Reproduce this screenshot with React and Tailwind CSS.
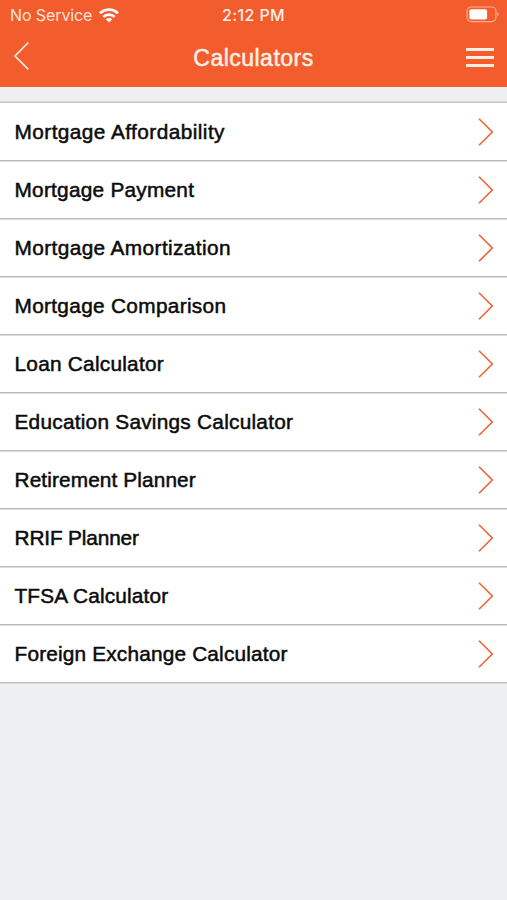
const rows = [
  { label: 'Mortgage Affordability', tracking: 'tracking-[0.44px]' },
  { label: 'Mortgage Payment', tracking: 'tracking-[0.25px]' },
  { label: 'Mortgage Amortization', tracking: 'tracking-[0.4px]' },
  { label: 'Mortgage Comparison', tracking: 'tracking-[0.32px]' },
  { label: 'Loan Calculator', tracking: 'tracking-[0.25px]' },
  { label: 'Education Savings Calculator', tracking: 'tracking-[0.25px]' },
  { label: 'Retirement Planner', tracking: 'tracking-[0.12px]' },
  { label: 'RRIF Planner', tracking: 'tracking-[-0.14px]' },
  { label: 'TFSA Calculator', tracking: 'tracking-[0.16px]' },
  { label: 'Foreign Exchange Calculator', tracking: 'tracking-[0.18px]' },
];

function WifiIcon() {
  return (
    <svg className="ml-[6.5px] h-[15px] w-[20px]" viewBox="0 0 20 15" fill="none" stroke="#fff" strokeWidth="2.7">
      <path d="M1 5.4C6 .4 14 .4 19 5.4" />
      <path d="M4.3 8.9C7.5 5.8 12.5 5.8 15.7 8.9" />
      <path d="M10 14.6L6.7 11.3C8.5 9.5 11.5 9.5 13.3 11.3Z" fill="#fff" stroke="none" />
    </svg>
  );
}

function BatteryIcon() {
  return (
    <svg className="-mt-[1px] h-[17px] w-[34px]" viewBox="0 0 34 17" fill="none">
      <rect x="1.1" y="1" width="28.8" height="14.6" rx="4" stroke="#fbae93" strokeWidth="1.2" />
      <rect x="3.3" y="3.2" width="17.8" height="10.2" rx="2" fill="#fff" />
      <path d="M31.3 6V10.6C33 9.8 33 6.8 31.3 6Z" fill="#fbae93" />
    </svg>
  );
}

function Header() {
  return (
    <header className="h-[87px] bg-[#f35c2c] text-white">
      <div className="grid h-[30px] grid-cols-3 items-center">
        <div className="flex items-center pl-[10px]">
          <span className="font-['Inter','Liberation_Sans',sans-serif] text-[16px] leading-[30px] tracking-[-0.1px] whitespace-nowrap text-[#ffe3d6]">No Service</span>
          <WifiIcon />
        </div>
        <div className="text-center font-['Inter','Liberation_Sans',sans-serif] text-[16px] font-medium leading-[30px] tracking-[0.4px] text-[#fff0e8]">2:12 PM</div>
        <div className="flex justify-end pr-[7px]">
          <BatteryIcon />
        </div>
      </div>
      <div className="grid h-[57px] grid-cols-3">
        <svg className="mt-[10.5px] ml-[13px] h-[30px] w-[18px]" viewBox="0 0 18 30" fill="none" stroke="#ffeadf" strokeWidth="1.7">
          <path d="M15.3 1.5L2 15L15.3 28.3" />
        </svg>
        <h1 className="mt-[13px] text-center text-[23px] leading-[30px] tracking-[0.48px] text-[#fff0e6] [-webkit-text-stroke:0.5px_#fff0e6]">Calculators</h1>
        <div className="mt-[18px] mr-[13px] flex flex-col items-end gap-[5px]">
          <span className="h-[3px] w-[28px] bg-[#ffeee3]" />
          <span className="h-[3px] w-[28px] bg-[#ffeee3]" />
          <span className="h-[3px] w-[28px] bg-[#ffeee3]" />
        </div>
      </div>
    </header>
  );
}

export default function App() {
  return (
    <div className="h-[900px] w-full overflow-hidden bg-[#edeff0] font-['Liberation_Sans',sans-serif]">
      <Header />
      <ul className="mt-[15px] border-t border-[#c2c4c4] bg-white shadow-[0_-1px_0_#d9dbdc]">
        {rows.map((row) => (
          <li key={row.label} className="flex h-[58px] items-center justify-between border-b border-[#b9bbbb] pr-[12px] pl-[14.5px] shadow-[0_1px_0_#dcdddd]">
            <span className={`text-[20.8px] leading-[30px] whitespace-nowrap text-[#0b0b0b] [-webkit-text-stroke:0.5px_#0b0b0b] ${row.tracking}`}>{row.label}</span>
            <svg className="h-[30px] w-[18px]" viewBox="0 0 18 30" fill="none" stroke="#ee6234" strokeWidth="1.6">
              <path d="M2 1.8L15.3 15L2 28.3" />
            </svg>
          </li>
        ))}
      </ul>
    </div>
  );
}
